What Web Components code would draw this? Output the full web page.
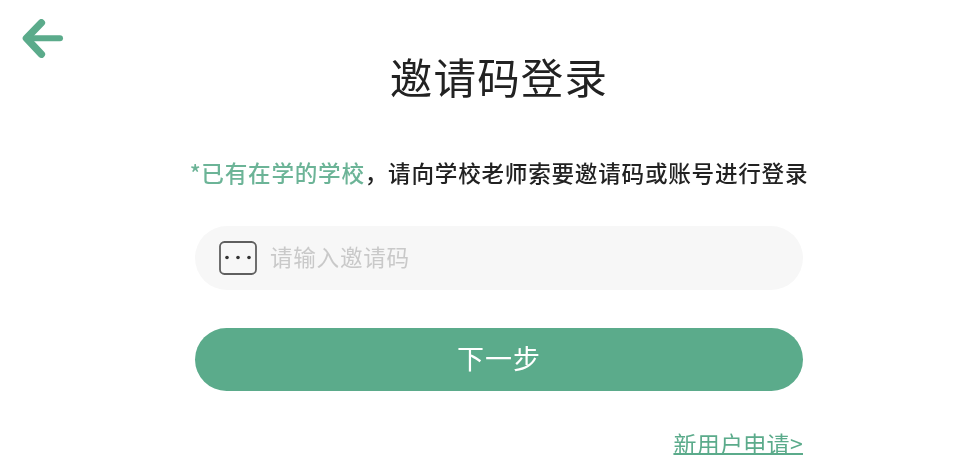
<!DOCTYPE html>
<html lang="zh">
<head>
<meta charset="utf-8">
<title>邀请码登录</title>
<style>
  html, body { margin: 0; height: 100%; background: #fff; overflow: hidden; }
  body { font-family: "Noto Sans CJK SC", "Noto Sans", sans-serif; }
</style>
</head>
<body>
<login-page>
  <span slot="title">邀请码登录</span>
  <span slot="hint-green">*已有在学的学校</span>
  <span slot="hint">，请向学校老师索要邀请码或账号进行登录</span>
</login-page>

<script>
class BackArrow extends HTMLElement
{
  constructor()
  {
    super();
    this.attachShadow({ mode: "open" });
    this.shadowRoot.innerHTML = `
      <style>
        :host { display: block; width: 44px; height: 40px; position: absolute; left: 21px; top: 19px; }
        svg { display: block; }
      </style>
      <svg width="44" height="40" viewBox="0 0 44 40" fill="none" stroke="#5bab8b" stroke-linecap="round" stroke-linejoin="round">
        <path stroke-width="7.4" d="M20.4 3.8 5.4 19.3 20.4 35.2"/>
        <path stroke-width="6" d="M6 19.3H39"/>
      </svg>`;
  }
}

class CodeInput extends HTMLElement
{
  constructor()
  {
    super();
    this.attachShadow({ mode: "open" });
    this.shadowRoot.innerHTML = `
      <style>
        :host {
          display: flex;
          align-items: center;
          gap: 13px;
          height: 64px;
          padding-left: 24px;
          box-sizing: border-box;
          border-radius: 32px;
          background: #f7f7f7;
        }
        .keypad { width: 38px; height: 34px; display: block; flex: none; }
        .text { font-size: 22.6px; letter-spacing: 0.7px; line-height: 32px; padding-bottom: 3px; color: #c9c9c9; }
      </style>
      <svg class="keypad" viewBox="0 0 38 34" fill="none">
        <rect x="1" y="1" width="36" height="32" rx="4.5" stroke="#5f5f5f" stroke-width="1.8"/>
        <circle cx="8" cy="16.5" r="1.8" fill="#333"/>
        <circle cx="19" cy="16.5" r="1.8" fill="#333"/>
        <circle cx="30" cy="16.5" r="1.8" fill="#333"/>
      </svg>
      <span class="text">请输入邀请码</span>`;
  }
}

class NextButton extends HTMLElement
{
  constructor()
  {
    super();
    this.attachShadow({ mode: "open" });
    this.shadowRoot.innerHTML = `
      <style>
        :host {
          display: flex;
          align-items: center;
          justify-content: center;
          height: 63px;
          padding-bottom: 4px;
          box-sizing: border-box;
          border-radius: 32px;
          background: #5bab8b;
          color: #fff;
          font-size: 27px;
          letter-spacing: 1px;
        }
      </style>
      <slot></slot>`;
  }
}

class LoginPage extends HTMLElement
{
  constructor()
  {
    super();
    this.attachShadow({ mode: "open" });
    this.shadowRoot.innerHTML = `
      <style>
        :host { display: block; height: 455px; overflow: hidden; position: relative; filter: blur(0.45px); }
        .main {
          display: flex;
          flex-direction: column;
          width: 608px;
          margin-left: 195px;
        }
        h1 {
          margin: 44px 0 0;
          text-align: center;
          font-size: 42.5px;
          letter-spacing: 1.2px;
          line-height: 64px;
          font-weight: 400;
          color: #222;
        }
        .hint {
          margin: 49px -20px 0;
          text-align: center;
          font-size: 22.6px;
          letter-spacing: 0.75px;
          font-weight: 500;
          line-height: 32px;
          white-space: nowrap;
          color: #222;
        }
        .green { color: #6cb497; }
        code-input { margin-top: 37px; }
        next-button { margin-top: 38px; }
        .apply {
          align-self: flex-end;
          margin-top: 40px;
          font-size: 23px;
          letter-spacing: 0.3px;
          line-height: 24px;
          color: #5bab8b;
          text-decoration: underline;
          text-underline-offset: 0px;
        }
      </style>
      <back-arrow></back-arrow>
      <div class="main">
        <h1><slot name="title"></slot></h1>
        <div class="hint"><span class="green"><slot name="hint-green"></slot></span><slot name="hint"></slot></div>
        <code-input></code-input>
        <next-button>下一步</next-button>
        <a class="apply">新用户申请&gt;</a>
      </div>`;
  }
}

customElements.define("back-arrow", BackArrow);
customElements.define("code-input", CodeInput);
customElements.define("next-button", NextButton);
customElements.define("login-page", LoginPage);
</script>
</body>
</html>
